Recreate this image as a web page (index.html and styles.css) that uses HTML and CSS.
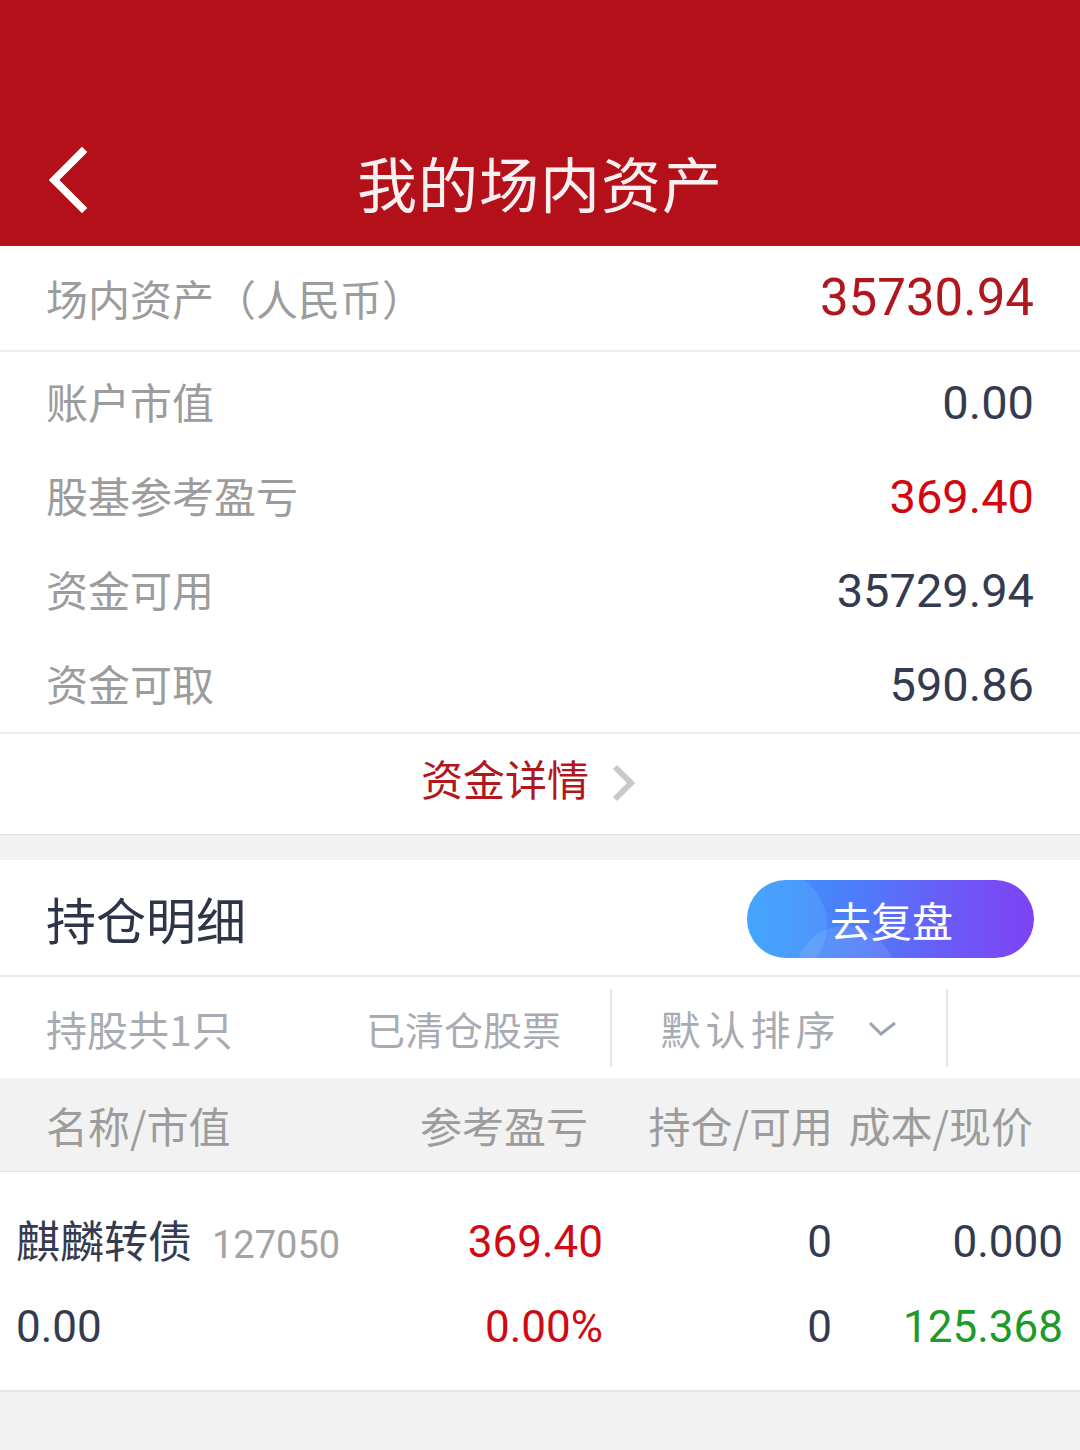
FILE: index.html
```html
<!DOCTYPE html>
<html lang="zh-CN">
<head>
<meta charset="utf-8">
<title>我的场内资产</title>
<link rel="stylesheet" href="styles.css">
</head>
<body>
<header class="topbar">
  <div class="nav">
    <a class="back" aria-label="返回">
      <svg width="44" height="70" viewBox="0 0 44 70"><path d="M33 5 L5 33 L33 61" fill="none" stroke="#fff" stroke-width="7.5" stroke-linecap="square"/></svg>
    </a>
    <h1 class="title">我的场内资产</h1>
    <span class="nav-spacer"></span>
  </div>
</header>

<section class="summary">
  <div class="total-row">
    <span class="label">场内资产（人民币）</span>
    <span class="total-value">35730.94</span>
  </div>
  <div class="rows">
    <div class="row"><span class="label">账户市值</span><span class="value">0.00</span></div>
    <div class="row"><span class="label">股基参考盈亏</span><span class="value red">369.40</span></div>
    <div class="row"><span class="label">资金可用</span><span class="value">35729.94</span></div>
    <div class="row"><span class="label">资金可取</span><span class="value">590.86</span></div>
  </div>
  <div class="detail-link">
    <span>资金详情</span>
    <svg width="30" height="40" viewBox="0 0 30 40"><path d="M6 4 L22 20 L6 36" fill="none" stroke="#c9c9cd" stroke-width="6"/></svg>
  </div>
</section>

<section class="holdings">
  <div class="holdings-head">
    <h2 class="holdings-title">持仓明细</h2>
    <button class="review-btn"><span>去复盘</span></button>
  </div>
  <div class="filters">
    <div class="filter-main">
      <span class="f-count">持股共1只</span>
      <span class="f-cleared">已清仓股票</span>
    </div>
    <div class="f-div"></div>
    <div class="filter-sort">
      <span class="sort-text">默认排序</span>
      <svg width="30" height="18" viewBox="0 0 30 18"><path d="M2 3 L13 14 L27 3" fill="none" stroke="#9ca1b0" stroke-width="3"/></svg>
    </div>
    <div class="f-div"></div>
    <div class="filter-rest"></div>
  </div>
  <div class="table-head">
    <span class="th th-left">名称/市值</span>
    <span class="th">参考盈亏</span>
    <span class="th">持仓/可用</span>
    <span class="th">成本/现价</span>
  </div>
  <div class="table-body">
    <div class="tr">
      <span class="td td-left"><span class="stock-name">麒麟转债</span><span class="stock-code">127050</span></span>
      <span class="td red2">369.40</span>
      <span class="td">0</span>
      <span class="td">0.000</span>
    </div>
    <div class="tr">
      <span class="td td-left">0.00</span>
      <span class="td red2">0.00%</span>
      <span class="td">0</span>
      <span class="td green">125.368</span>
    </div>
  </div>
</section>
</body>
</html>
```
FILE: styles.css
```css
* { box-sizing: border-box; }

body {
  margin: 0;
  background: #f2f2f2;
  font-family: "Roboto", "Noto Sans CJK SC", sans-serif;
  color: #343b51;
}

.topbar {
  background: #b41019;
  height: 246px;
  padding-top: 124px;
}

.nav {
  display: grid;
  grid-template-columns: 1fr auto 1fr;
  align-items: center;
  height: 122px;
}

.back {
  display: flex;
  align-items: center;
  padding-left: 49px;
  padding-bottom: 6px;
}

.title {
  margin: 0;
  font-family: "Noto Sans CJK SC", sans-serif;
  font-weight: 400;
  font-size: 60px;
  line-height: 80px;
  color: #f8f0f0;
  letter-spacing: 1px;
  padding-bottom: 6px;
}

.summary {
  background: #fff;
  border-bottom: 1px solid #e3e3e3;
}

.total-row {
  height: 106px;
  padding: 0 46px 0 46px;
  display: flex;
  align-items: center;
  justify-content: space-between;
  border-bottom: 2px solid #ececec;
}

.label {
  font-family: "Noto Sans CJK SC", sans-serif;
  font-size: 42px;
  line-height: 56px;
  color: #9c9c9c;
}

.total-value {
  font-size: 51px;
  line-height: 60px;
  color: #b0161e;
}

.rows {
  padding-top: 4px;
  border-bottom: 2px solid #ececec;
}

.row {
  height: 94px;
  padding: 0 46px;
  display: flex;
  align-items: center;
  justify-content: space-between;
}

.row .label { padding-bottom: 4px; }

.value {
  font-size: 47px;
  line-height: 56px;
  color: #343b51;
}

.value.red { color: #d1060f; }

.detail-link {
  height: 100px;
  display: flex;
  align-items: center;
  justify-content: center;
  gap: 20px;
  padding-right: 20px;
  padding-bottom: 12px;
}

.detail-link span {
  font-family: "Noto Sans CJK SC", sans-serif;
  font-size: 42px;
  line-height: 56px;
  color: #b3161d;
}

.detail-link svg { margin-top: 10px; }

.holdings {
  margin-top: 25px;
  background: #fff;
  border-bottom: 2px solid #e6e6e6;
}

.holdings-head {
  height: 117px;
  padding: 0 46px;
  display: flex;
  align-items: center;
  justify-content: space-between;
  border-bottom: 2px solid #e7eaee;
}

.holdings-title {
  margin: 0;
  font-family: "Noto Sans CJK SC", sans-serif;
  font-weight: 400;
  font-size: 50px;
  line-height: 64px;
  color: #2f3446;
}

.review-btn {
  position: relative;
  overflow: hidden;
  width: 287px;
  height: 78px;
  border: none;
  border-radius: 39px;
  background: linear-gradient(90deg, #359dfd 0%, #4f7bfa 40%, #6a5bf7 70%, #7f42f4 100%);
  padding: 0;
  margin-top: 2px;
  display: flex;
  align-items: center;
  justify-content: center;
}

.review-btn::before {
  content: "";
  position: absolute;
  left: -30px;
  top: -10px;
  width: 110px;
  height: 110px;
  border-radius: 50%;
  background: rgba(120, 200, 255, 0.22);
}

.review-btn::after {
  content: "";
  position: absolute;
  left: 48px;
  top: 46px;
  width: 100px;
  height: 100px;
  border-radius: 50%;
  background: rgba(255, 255, 255, 0.10);
}

.review-btn span {
  position: relative;
  z-index: 1;
  font-family: "Noto Sans CJK SC", sans-serif;
  font-size: 41px;
  line-height: 52px;
  color: #fff;
  padding-left: 2px;
}

.filters {
  height: 101px;
  display: flex;
  align-items: center;
}

.filter-main {
  width: 610px;
  display: flex;
  align-items: center;
  justify-content: space-between;
  padding: 0 49px 0 46px;
}

.f-count, .f-cleared, .sort-text {
  font-family: "Noto Sans CJK SC", sans-serif;
  font-size: 39px;
  line-height: 54px;
  color: #a9abb3;
}

.f-count { font-size: 41px; }

.f-div {
  width: 2px;
  height: 78px;
  background: #e4e6eb;
}

.filter-sort {
  width: 334px;
  display: flex;
  align-items: center;
  justify-content: center;
  gap: 32px;
}

.sort-text { font-size: 40px; letter-spacing: 5px; margin-right: -5px; }

.filter-sort svg { margin-top: 2px; }

.filter-rest { flex: 1; }

.table-head {
  height: 94px;
  background: #f2f2f2;
  border-bottom: 1px solid #e2e2e2;
  padding: 0 47px 0 46px;
  display: grid;
  grid-template-columns: 354px 188px 245px 200px;
  align-items: center;
}

.th {
  font-family: "Noto Sans CJK SC", sans-serif;
  font-size: 42px;
  line-height: 56px;
  color: #9c9c9c;
  text-align: right;
  white-space: nowrap;
}

.th-left { text-align: left; }

.table-body {
  padding: 27px 17px 21px 16px;
}

.tr {
  height: 85px;
  display: grid;
  grid-template-columns: 414px 173px 229px 231px;
  align-items: center;
}

.td {
  font-size: 44px;
  line-height: 56px;
  color: #343b51;
  text-align: right;
  white-space: nowrap;
}

.td-left {
  text-align: left;
  display: flex;
  align-items: baseline;
}

.stock-name {
  font-family: "Noto Sans CJK SC", sans-serif;
  font-size: 44px;
  color: #343b51;
}

.stock-code {
  margin-left: 20px;
  font-size: 38px;
  color: #a3a3a3;
}

.red2 { color: #cf0a12; }
.green { color: #1e9a27; }
```
